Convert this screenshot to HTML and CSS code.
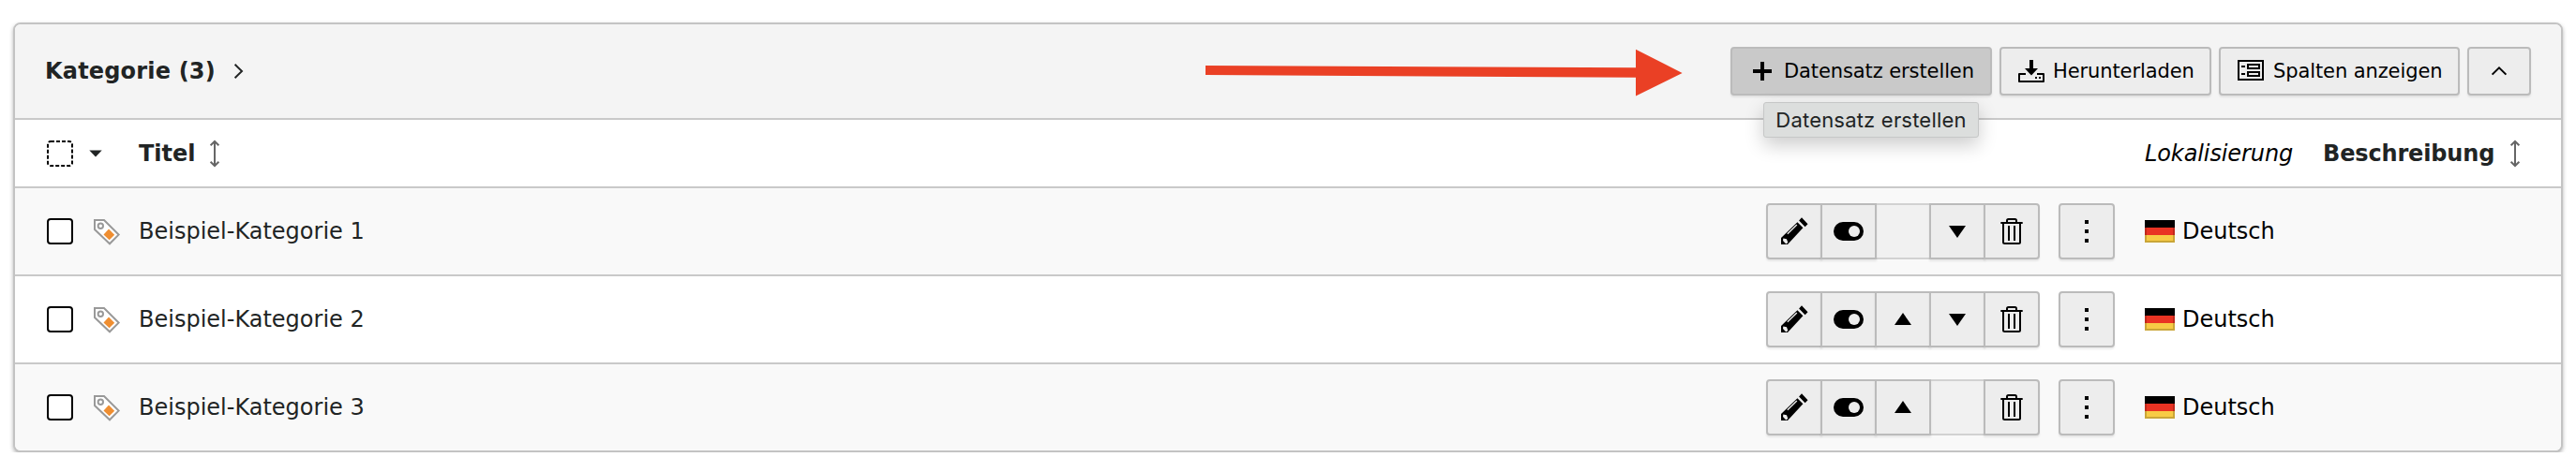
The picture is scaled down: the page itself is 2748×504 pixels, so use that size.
FILE: index.html
```html
<!DOCTYPE html>
<html lang="de">
<head>
    <meta charset="UTF-8">
    <meta name="viewport" content="width=device-width, initial-scale=1.0">
    <title>Kategorie</title>
    <link rel="stylesheet" href="styles.css">
</head>
<body>
    <svg class="sprite" aria-hidden="true">
        <symbol id="i-plus" viewBox="0 0 32 32"><path d="M14 6h4v8h8v4h-8v8h-4v-8H6v-4h8z"/></symbol>
        <symbol id="i-download" viewBox="0 0 32 32">
            <path d="M14 4h4v9h5l-7 7.6L9 13h5z"/>
            <path d="M10 19H3v8h26v-8h-7" fill="none" stroke="currentColor" stroke-width="2" stroke-linejoin="round"/>
            <path d="M20 22h2v2h-2zM24 22h2v2h-2z"/>
        </symbol>
        <symbol id="i-columns" viewBox="0 0 32 32">
            <path d="M3 5h26v20H3zM13 9h12v4H13zM13 17h12v4H13z" fill="none" stroke="currentColor" stroke-width="2"/>
            <path d="M6 10h4v2H6zM6 18h4v2H6z"/>
        </symbol>
        <symbol id="i-chevron-up" viewBox="0 0 32 32"><path d="M8.6 19.6 16 12.3l7.4 7.3" fill="none" stroke="currentColor" stroke-width="2"/></symbol>
        <symbol id="i-chevron-right" viewBox="0 0 32 32"><path d="M11.6 8.8 19 16l-7.4 7.2" fill="none" stroke="currentColor" stroke-width="2"/></symbol>
        <symbol id="i-sort" viewBox="0 0 32 32"><path d="M16 3.500v25M11.600 7.200 16 3l4.400 4.200M11.600 24.800 16 29l4.400-4.200" fill="none" stroke="currentColor" stroke-width="2"/></symbol>
        <symbol id="i-caret" viewBox="0 0 32 32"><path d="M9.300 12.500h13.400L16 19.500z"/></symbol>
        <symbol id="i-down" viewBox="0 0 32 32"><path d="M7 10h18l-9 13z"/></symbol>
        <symbol id="i-up" viewBox="0 0 32 32"><path d="M7 22h18L16 9z"/></symbol>
        <symbol id="i-edit" viewBox="0 0 32 32">
            <path d="m24 1.300 6.500 6.900-2.900 3-6.500-6.800zM19.400 6.200l6 6L9 30H2v-7z"/>
            <path d="m8.800 18.800 10-9.800" fill="none" stroke="#ededed" stroke-width="1.400"/>
            <path d="M4.300 23.400 8 24.200l1.300 3.800-2 1.400-3.300-3.300z" fill="#ededed"/>
        </symbol>
        <symbol id="i-toggle" viewBox="0 0 32 32"><rect y="6" width="32" height="20" rx="10"/><circle cx="22" cy="16" r="6" fill="#ededed"/></symbol>
        <symbol id="i-delete" viewBox="0 0 32 32"><path d="M4.300 7h23.400M11 7V4.500Q11 3 12.500 3h7Q21 3 21 4.500V7M7 7v20.500Q7 29 8.500 29h15q1.500 0 1.500-1.500V7M13 10v16M19 10v16" fill="none" stroke="currentColor" stroke-width="2"/></symbol>
        <symbol id="i-more" viewBox="0 0 32 32"><path d="M14 4h4v4h-4zM14 14h4v4h-4zM14 24h4v4h-4z"/></symbol>
        <symbol id="i-category" viewBox="0 0 32 32">
            <path d="M3 4h10l15.600 15.600L19 29.300 3 14z" fill="#fff" stroke="#999" stroke-width="2"/>
            <circle cx="9.300" cy="10.300" r="2.700" fill="none" stroke="#999" stroke-width="2"/>
            <path d="m18 13.500 6.200 6.200-5.600 5.600-6.100-5.800z" fill="#ef8e31"/>
        </symbol>
        <symbol id="i-de" viewBox="0 0 32 24">
            <path d="M0 0h32v8H0z"/><path d="M0 8h32v8H0z" fill="#e93323"/><path d="M0 16h32v8H0z" fill="#f7cb45"/>
            <path d="M1 0v23h30V0" fill="none" stroke="#000" stroke-opacity=".18" stroke-width="2"/>
        </symbol>
    </svg>

    <div class="recordlist">
        <div class="recordlist-heading">
            <h1 class="recordlist-title">Kategorie (3)</h1>
            <svg class="icon"><use href="#i-chevron-right"/></svg>
            <div class="recordlist-actions">
                <button class="btn btn-new btn-active"><svg class="icon"><use href="#i-plus"/></svg><span>Datensatz erstellen</span></button>
                <button class="btn btn-download"><svg class="icon"><use href="#i-download"/></svg><span>Herunterladen</span></button>
                <button class="btn btn-columns"><svg class="icon"><use href="#i-columns"/></svg><span>Spalten anzeigen</span></button>
                <button class="btn btn-collapse"><svg class="icon"><use href="#i-chevron-up"/></svg></button>
            </div>
            <svg class="arrow" viewBox="0 0 510 56"><path d="M0 19 459 21.300V1.700L508.600 27 459 51.500V31.700L0 29z"/></svg>
            <div class="tooltip">Datensatz erstellen</div>
        </div>

        <div class="row row-head">
            <div class="col-select">
                <svg class="check-all" viewBox="0 0 28 28"><rect x="1" y="1" width="26" height="26" rx="3"/></svg>
                <svg class="icon"><use href="#i-caret"/></svg>
            </div>
            <div class="col-title"><b class="label-title">Titel</b><svg class="icon icon-sort"><use href="#i-sort"/></svg></div>
            <div class="col-control"></div>
            <div class="col-local"><i>Lokalisierung</i></div>
            <div class="col-desc"><b class="label-desc">Beschreibung</b><svg class="icon icon-sort"><use href="#i-sort"/></svg></div>
        </div>

        <div class="row">
            <div class="col-select"><input type="checkbox" class="check"><svg class="icon icon-record"><use href="#i-category"/></svg></div>
            <div class="col-title">Beispiel-Kategorie 1</div>
            <div class="col-control">
                <div class="btn-group">
                    <button class="btn"><svg class="icon"><use href="#i-edit"/></svg></button>
                    <button class="btn"><svg class="icon"><use href="#i-toggle"/></svg></button>
                    <span class="btn disabled"></span>
                    <button class="btn"><svg class="icon"><use href="#i-down"/></svg></button>
                    <button class="btn"><svg class="icon"><use href="#i-delete"/></svg></button>
                </div>
                <div class="btn-group"><button class="btn"><svg class="icon"><use href="#i-more"/></svg></button></div>
            </div>
            <div class="col-local"><svg class="flag"><use href="#i-de"/></svg><span>Deutsch</span></div>
            <div class="col-desc"></div>
        </div>

        <div class="row">
            <div class="col-select"><input type="checkbox" class="check"><svg class="icon icon-record"><use href="#i-category"/></svg></div>
            <div class="col-title">Beispiel-Kategorie 2</div>
            <div class="col-control">
                <div class="btn-group">
                    <button class="btn"><svg class="icon"><use href="#i-edit"/></svg></button>
                    <button class="btn"><svg class="icon"><use href="#i-toggle"/></svg></button>
                    <button class="btn"><svg class="icon"><use href="#i-up"/></svg></button>
                    <button class="btn"><svg class="icon"><use href="#i-down"/></svg></button>
                    <button class="btn"><svg class="icon"><use href="#i-delete"/></svg></button>
                </div>
                <div class="btn-group"><button class="btn"><svg class="icon"><use href="#i-more"/></svg></button></div>
            </div>
            <div class="col-local"><svg class="flag"><use href="#i-de"/></svg><span>Deutsch</span></div>
            <div class="col-desc"></div>
        </div>

        <div class="row">
            <div class="col-select"><input type="checkbox" class="check"><svg class="icon icon-record"><use href="#i-category"/></svg></div>
            <div class="col-title">Beispiel-Kategorie 3</div>
            <div class="col-control">
                <div class="btn-group">
                    <button class="btn"><svg class="icon"><use href="#i-edit"/></svg></button>
                    <button class="btn"><svg class="icon"><use href="#i-toggle"/></svg></button>
                    <button class="btn"><svg class="icon"><use href="#i-up"/></svg></button>
                    <span class="btn disabled"></span>
                    <button class="btn"><svg class="icon"><use href="#i-delete"/></svg></button>
                </div>
                <div class="btn-group"><button class="btn"><svg class="icon"><use href="#i-more"/></svg></button></div>
            </div>
            <div class="col-local"><svg class="flag"><use href="#i-de"/></svg><span>Deutsch</span></div>
            <div class="col-desc"></div>
        </div>
    </div>
</body>
</html>
```

FILE: styles.css
```css
* {
    box-sizing: border-box;
}
body {
    margin: 0;
    padding: 24px 14px 0;
    background: #fff;
    color: #212424;
    font-family: Verdana, 'DejaVu Sans', sans-serif;
    font-size: 24px;
    line-height: 36px;
}
.sprite {
    display: none;
}
.icon {
    display: block;
    flex: none;
    width: 32px;
    height: 32px;
    fill: currentColor;
}
.recordlist {
    border: 2px solid #c3c3c3;
    border-radius: 8px;
    background: #fff;
    box-shadow: 0 2px 4px rgba(0, 0, 0, 0.3);
}
.recordlist-heading {
    position: relative;
    display: flex;
    align-items: center;
    height: 100px;
    padding: 0 32px;
    border-radius: 6px 6px 0 0;
    background: #f4f4f4;
}
.recordlist-title {
    width: 191px;
    margin: 0;
    font-size: 24px;
    letter-spacing: 0.18px;
    white-space: nowrap;
}
.recordlist-actions {
    display: flex;
    gap: 8px;
    margin-left: auto;
}
.btn {
    display: flex;
    align-items: center;
    gap: 7px;
    height: 52px;
    margin: 0;
    padding: 0 16px;
    border: 2px solid #bbb;
    border-radius: 4px;
    background: #ededed;
    box-shadow: 0 2px 2px rgba(0, 0, 0, 0.08);
    color: #000;
    font-family: inherit;
    font-size: 21px;
    letter-spacing: -0.1px;
    white-space: nowrap;
}
.btn-new {
    width: 279px;
}
.btn-download {
    width: 226px;
}
.btn-columns {
    width: 257px;
    gap: 8px;
}
.btn-active {
    background: #c9c9c9;
}
.arrow {
    position: absolute;
    top: 25px;
    left: 1270px;
    width: 510px;
    height: 56px;
    fill: #ea4025;
}
.tooltip {
    position: absolute;
    z-index: 2;
    top: 83px;
    left: 1865px;
    width: 230px;
    height: 38px;
    border: 1px solid #c6c7c7;
    border-radius: 3px;
    background: #dcdedd;
    box-shadow: 0 8px 20px rgba(0, 0, 0, 0.2);
    font-family: Inter, sans-serif;
    font-size: 22px;
    line-height: 36px;
    letter-spacing: 0.2px;
    text-align: center;
    white-space: nowrap;
}
.row {
    display: grid;
    grid-template-columns: 132px 1fr 404px 190px 254px;
    height: 94px;
    border-top: 2px solid #c9c9c9;
}
.row > div {
    display: flex;
    align-items: center;
    white-space: nowrap;
}
.row:nth-child(odd) {
    background: #f9f9f9;
}
.row:last-child {
    border-radius: 0 0 6px 6px;
}
.row-head {
    height: 73px;
}
.row .col-select {
    padding-left: 34px;
}
.row-head i {
    letter-spacing: -0.1px;
}
.label-title {
    width: 65px;
}
.label-desc {
    width: 189px;
    letter-spacing: -0.15px;
}
.check-all {
    width: 28px;
    height: 28px;
    margin-right: 8px;
    fill: none;
    stroke: #000;
    stroke-width: 2;
    stroke-dasharray: 4 2;
}
.check {
    appearance: none;
    width: 28px;
    height: 28px;
    margin: 0;
    border: 2px solid #000;
    border-radius: 4px;
    background: #fff;
}
.icon-record {
    margin-left: 20px;
}
.icon-sort {
    color: #666;
}
.col-control {
    gap: 20px;
}
.btn-group {
    display: flex;
}
.btn-group .btn {
    justify-content: center;
    width: 60px;
    height: 60px;
    padding: 0;
    border-radius: 0;
}
.btn-group .btn + .btn {
    margin-left: -2px;
}
.btn-group .btn:first-child {
    border-top-left-radius: 4px;
    border-bottom-left-radius: 4px;
}
.btn-group .btn:last-child {
    border-top-right-radius: 4px;
    border-bottom-right-radius: 4px;
}
.btn-group .disabled {
    border-color: #d2d2d2;
    background: #f1f1f1;
    box-shadow: none;
}
.btn-group .btn:not(.disabled) {
    z-index: 1;
}
.col-local {
    gap: 8px;
    color: #000;
}
.flag {
    width: 32px;
    height: 24px;
}
```
